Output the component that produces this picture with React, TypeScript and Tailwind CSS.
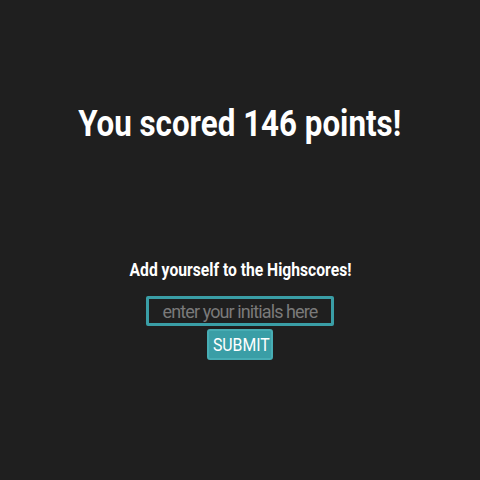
export default function App() {
  return (
    <div className="min-h-screen w-full bg-[#1f1f1f] flex flex-col items-center text-white font-['Roboto',sans-serif]">
      {/* SCORE */}
      <h1 className="mt-[102px] text-[36px] leading-[44px] font-bold whitespace-nowrap scale-x-[0.87]">
        You scored 146 points!
      </h1>

      {/* HIGHSCORE FORM */}
      <h2 className="mt-[112px] text-[18px] leading-[24px] font-bold whitespace-nowrap scale-x-[0.87]">
        Add yourself to the Highscores!
      </h2>
      <input
        type="text"
        placeholder="enter your initials here"
        className="mt-[14px] w-[188px] h-[30px] bg-[#1f1f1f] border-[3px] border-[#3a9ea6] rounded-[2px] text-center text-[18px] tracking-[-0.9px] text-white placeholder:text-[#7a7a7a] outline-none"
      />
      <button className="mt-[3px] w-[66px] h-[31px] bg-[#3a9ea6] border-2 border-[#47adb4] rounded-[3px] text-[18px] leading-none text-white">
        <span className="inline-block scale-x-[0.88]">SUBMIT</span>
      </button>
    </div>
  );
}
